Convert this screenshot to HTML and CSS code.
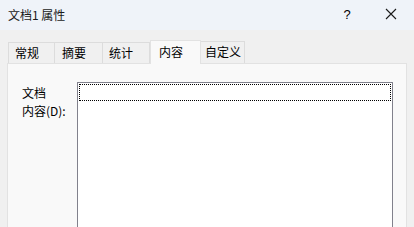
FILE: index.html
```html
<!DOCTYPE html>
<html lang="zh-CN">
<head>
    <meta charset="UTF-8">
    <title>文档1 属性</title>
    <link rel="stylesheet" href="styles.css">
</head>
<body>
    <div class="dialog">
        <div class="titlebar">
            <div class="title">文档1 属性</div>
            <div class="help-btn">?</div>
            <div class="close-btn">
                <svg width="12" height="12" viewBox="0 0 12 12">
                    <path d="M1 1 L11 11 M11 1 L1 11" stroke="#1a1a1a" stroke-width="1.1" fill="none"/>
                </svg>
            </div>
        </div>

        <div class="dialog-body">
            <div class="tabs">
                <div class="tab tab-general">常规</div>
                <div class="tab tab-summary">摘要</div>
                <div class="tab tab-stats">统计</div>
                <div class="tab tab-contents active">内容</div>
                <div class="tab tab-custom">自定义</div>
            </div>

            <div class="panel">
                <div class="field-label">文档<br>内容(D):</div>
                <div class="textbox">
                    <div class="focus-rect"></div>
                </div>
            </div>
        </div>
    </div>
</body>
</html>
```

FILE: styles.css
```css
body {
    margin: 0;
    width: 414px;
    height: 227px;
    overflow: hidden;
    font-family: "Noto Sans CJK SC", "Liberation Sans", sans-serif;
    font-size: 12px;
    color: #000;
    background-color: #f0f0f0;
}

.titlebar {
    height: 30px;
    display: flex;
    align-items: center;
    padding-left: 8px;
    background-color: #eff3f9;
}

.title {
    flex: 1;
    color: #1a1a1a;
    font-size: 12px;
    margin-top: -1px;
}

.help-btn {
    width: 46px;
    text-align: center;
    font-family: "Liberation Sans", sans-serif;
    font-size: 13px;
    margin-top: -1px;
    margin-right: -2px;
}

.close-btn {
    width: 46px;
    height: 30px;
    display: flex;
    align-items: center;
    justify-content: center;
    margin-top: -2px;
}

.dialog-body {
    padding: 9px 7px 0 7px;
}

.tabs {
    display: flex;
    align-items: flex-end;
    padding-left: 1px;
    height: 24px;
}

.tab {
    height: 21px;
    line-height: 20px;
    border: 1px solid #dcdcdc;
    border-bottom: none;
    border-left: none;
    padding-left: 6px;
    box-sizing: border-box;
    background-color: #f0f0f0;
}

.tab-general {
    border-left: 1px solid #dcdcdc;
    width: 47px;
}

.tab-summary {
    width: 48px;
    padding-left: 7px;
}

.tab-stats {
    width: 47px;
    padding-left: 6px;
}

.tab-contents {
    width: 51px;
    padding-left: 8px;
}

.tab-custom {
    width: 44px;
    padding-left: 4px;
    height: 22px;
}

.tab.active {
    height: 24px;
    line-height: 22px;
    background-color: #f9f9f9;
    border: 1px solid #e2e2e2;
    border-bottom: none;
    position: relative;
    top: 1px;
}

.panel {
    display: flex;
    border: 1px solid #e2e2e2;
    border-bottom: none;
    background-color: #f9f9f9;
    padding: 18px 13px 0 14px;
    height: 145px;
}

.field-label {
    width: 55px;
    line-height: 18px;
    margin-top: 2px;
}

.textbox {
    flex: 1;
    background-color: #fff;
    border: 1px solid #81818c;
    border-bottom: none;
    padding: 1px;
}

.focus-rect {
    height: 15px;
    border: 1px dotted #000;
}
```
